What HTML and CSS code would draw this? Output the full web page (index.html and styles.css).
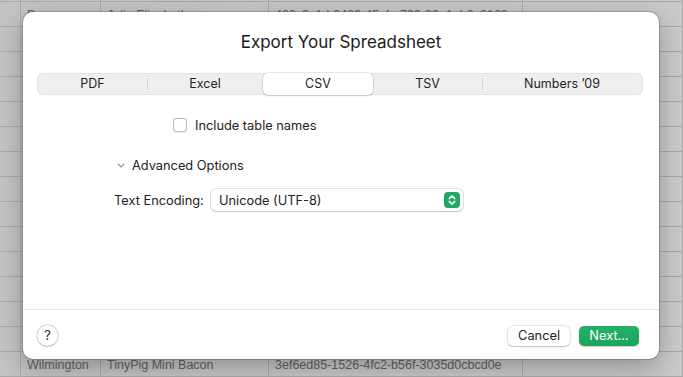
FILE: index.html
```html
<!DOCTYPE html>
<html lang="en">
<head>
    <meta charset="UTF-8">
    <meta name="viewport" content="width=device-width, initial-scale=1.0">
    <title>Export Your Spreadsheet</title>
    <link rel="stylesheet" href="styles.css">
</head>
<body>
    <div class="grid">
        <div class="row"><span></span><span></span><span></span><span></span><span></span></div>
        <div class="row"><span></span><span>Durango</span><span>Julia Elizabeth</span><span>429c3c1d-3489-45cf-a799-29e1ab2c3163</span><span></span></div>
        <div class="row"><span></span><span></span><span></span><span></span><span></span></div>
        <div class="row"><span></span><span></span><span></span><span></span><span></span></div>
        <div class="row"><span></span><span></span><span></span><span></span><span></span></div>
        <div class="row"><span></span><span></span><span></span><span></span><span></span></div>
        <div class="row"><span></span><span></span><span></span><span></span><span></span></div>
        <div class="row"><span></span><span></span><span></span><span></span><span></span></div>
        <div class="row"><span></span><span></span><span></span><span></span><span></span></div>
        <div class="row"><span></span><span></span><span></span><span></span><span></span></div>
        <div class="row"><span></span><span></span><span></span><span></span><span></span></div>
        <div class="row"><span></span><span></span><span></span><span></span><span></span></div>
        <div class="row"><span></span><span></span><span></span><span></span><span></span></div>
        <div class="row"><span></span><span></span><span></span><span></span><span></span></div>
        <div class="row"><span></span><span></span><span></span><span></span><span></span></div>
        <div class="row"><span></span><span>Wilmington</span><span>TinyPig Mini Bacon</span><span>3ef6ed85-1526-4fc2-b56f-3035d0cbcd0e</span><span></span></div>
    </div>

    <div class="dialog">
        <h1 class="dialog-title">Export Your Spreadsheet</h1>

        <div class="segmented">
            <div class="seg">PDF</div>
            <div class="seg sep">Excel</div>
            <div class="seg active">CSV</div>
            <div class="seg">TSV</div>
            <div class="seg sep">Numbers ’09</div>
        </div>

        <div class="options">
            <label class="check-row">
                <span class="checkbox"></span>
                <span>Include table names</span>
            </label>

            <div class="disclosure">
                <svg width="8" height="5" viewBox="0 0 8 5"><polyline points="0.7,0.7 4,4 7.3,0.7" fill="none" stroke="#8e8e8e" stroke-width="1.1"/></svg>
                <span>Advanced Options</span>
            </div>

            <div class="field-row">
                <span class="field-label">Text Encoding:</span>
                <div class="popup">
                    <span>Unicode (UTF-8)</span>
                    <span class="stepper">
                        <svg width="16" height="16" viewBox="0 0 16 16">
                            <polyline points="5.2,6.6 8,3.9 10.8,6.6" fill="none" stroke="#fff" stroke-width="1.5" stroke-linecap="round" stroke-linejoin="round"/>
                            <polyline points="5.2,9.4 8,12.1 10.8,9.4" fill="none" stroke="#fff" stroke-width="1.5" stroke-linecap="round" stroke-linejoin="round"/>
                        </svg>
                    </span>
                </div>
            </div>
        </div>

        <div class="footer">
            <button class="help">?</button>
            <div class="actions">
                <button class="btn">Cancel</button>
                <button class="btn primary">Next…</button>
            </div>
        </div>
    </div>
</body>
</html>
```

FILE: styles.css
```css
body {
    margin: 0;
    width: 683px;
    height: 377px;
    overflow: hidden;
    background: #c5c5c5;
    font-family: Inter, "Liberation Sans", sans-serif;
    position: relative;
}

/* dimmed spreadsheet behind the sheet */
.grid {
    margin-top: -23px;
    background: linear-gradient(to right, #c3c3c3, #c7c7c7 60%, #c9c9c9);
}
.row {
    display: grid;
    grid-template-columns: 21px 80px 168px 254px 1fr;
    height: 24px;
    border-bottom: 1px solid #a9a9a9;
}
.row span {
    border-right: 1px solid #a9a9a9;
    padding: 0 6px;
    font-family: "Liberation Sans", sans-serif;
    font-size: 12.5px;
    line-height: 26px;
    color: #626262;
    white-space: nowrap;
    overflow: hidden;
}
.row span:first-child {
    padding: 0;
}

.dialog {
    position: absolute;
    left: 23px;
    top: 12px;
    width: 636px;
    height: 347px;
    background: #fff;
    border-radius: 10px;
    box-shadow: 0 0 0 1px rgba(0,0,0,0.18), 0 8px 24px rgba(0,0,0,0.28);
    display: flex;
    flex-direction: column;
    color: #222;
}
.dialog-title {
    margin: 19px 0 0;
    font-size: 17px;
    font-weight: 400;
    line-height: 22px;
    text-align: center;
    color: #1a1a1a;
}

.segmented {
    margin: 20px 16px 0 14px;
    height: 20px;
    display: grid;
    grid-template-columns: 109px 116px 110px 109px 1fr;
    background: #efefef;
    border: 1px solid #e3e3e3;
    border-radius: 6px;
}
.seg {
    position: relative;
    font-size: 12.5px;
    line-height: 20px;
    text-align: center;
    color: #1f1f1f;
}
.seg.sep::before {
    content: "";
    position: absolute;
    left: 0;
    top: 4px;
    height: 12px;
    border-left: 1px solid #d6d6d6;
}
.seg.active {
    background: #fff;
    border-radius: 5px;
    box-shadow: 0 0 0 0.5px rgba(0,0,0,0.18), 0 1px 2px rgba(0,0,0,0.15);
    margin: -1px 0;
    line-height: 22px;
}

.options {
    flex: 1;
    font-size: 12.8px;
    color: #222;
}
.check-row {
    display: flex;
    align-items: center;
    gap: 8px;
    margin: 23px 0 0 150px;
    height: 14px;
}
.checkbox {
    width: 12px;
    height: 12px;
    border: 1px solid #bcbcbc;
    border-radius: 3px;
    background: #fff;
    box-shadow: 0 0.5px 1px rgba(0,0,0,0.08);
}
.disclosure {
    display: flex;
    align-items: center;
    gap: 7px;
    margin: 26px 0 0 94px;
    height: 14px;
}
.field-row {
    display: flex;
    align-items: center;
    margin: 17px 0 0 91px;
}
.field-label {
    width: 97px;
}
.popup {
    box-sizing: border-box;
    width: 252px;
    height: 22px;
    display: flex;
    align-items: center;
    justify-content: space-between;
    padding: 0 3px 0 8px;
    background: #fff;
    border-radius: 5px;
    box-shadow: 0 0 0 0.5px rgba(0,0,0,0.22), 0 1px 1.5px rgba(0,0,0,0.14);
}
.stepper {
    width: 16px;
    height: 16px;
    border-radius: 4px;
    background: #1fa862;
    display: flex;
}

.footer {
    height: 49px;
    border-top: 1px solid #e4e4e4;
    display: flex;
    align-items: center;
    justify-content: space-between;
    padding: 0 20px 0 14px;
}
.help {
    width: 21px;
    height: 21px;
    border-radius: 50%;
    border: none;
    background: #fff;
    box-shadow: 0 0 0 0.5px rgba(0,0,0,0.25), 0 1px 1.5px rgba(0,0,0,0.15);
    font-family: Inter, sans-serif;
    font-size: 13px;
    color: #222;
    padding: 0;
    margin-top: 1px;
}
.actions {
    display: flex;
    gap: 9px;
    margin-top: 2px;
}
.btn {
    height: 20px;
    padding: 0 10px;
    border: none;
    border-radius: 5px;
    background: #fff;
    box-shadow: 0 0 0 0.5px rgba(0,0,0,0.22), 0 1px 1.5px rgba(0,0,0,0.14);
    font-family: Inter, sans-serif;
    font-size: 12.8px;
    color: #222;
}
.btn.primary {
    width: 60px;
    background: linear-gradient(#22b067, #1ba55d);
    color: #fff;
    box-shadow: 0 0.5px 1px rgba(0,0,0,0.2);
}
```
